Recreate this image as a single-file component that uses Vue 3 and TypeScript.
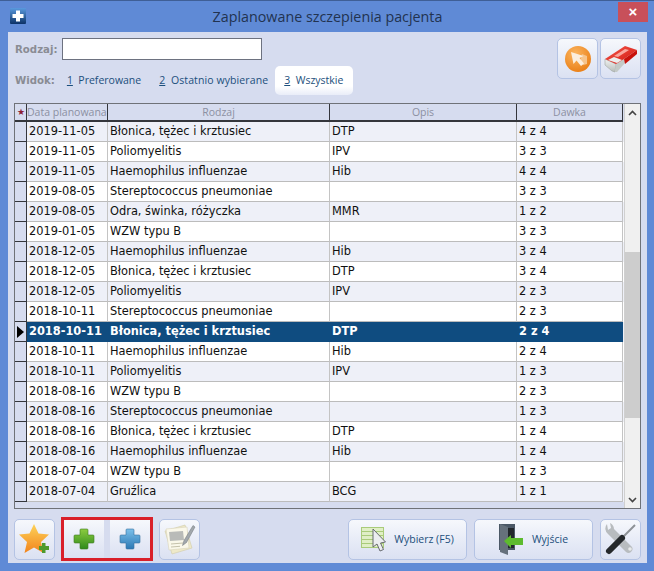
<script setup lang="ts">
interface Row { d: string; r: string; o: string; k: string; sel?: boolean }
const rows: Row[] = [
  { d: '2019-11-05', r: 'Błonica, tężec i krztusiec', o: 'DTP', k: '4 z 4' },
  { d: '2019-11-05', r: 'Poliomyelitis', o: 'IPV', k: '3 z 3' },
  { d: '2019-11-05', r: 'Haemophilus influenzae', o: 'Hib', k: '4 z 4' },
  { d: '2019-08-05', r: 'Stereptococcus pneumoniae', o: '', k: '3 z 3' },
  { d: '2019-08-05', r: 'Odra, świnka, różyczka', o: 'MMR', k: '1 z 2' },
  { d: '2019-01-05', r: 'WZW typu B', o: '', k: '3 z 3' },
  { d: '2018-12-05', r: 'Haemophilus influenzae', o: 'Hib', k: '3 z 4' },
  { d: '2018-12-05', r: 'Błonica, tężec i krztusiec', o: 'DTP', k: '3 z 4' },
  { d: '2018-12-05', r: 'Poliomyelitis', o: 'IPV', k: '2 z 3' },
  { d: '2018-10-11', r: 'Stereptococcus pneumoniae', o: '', k: '2 z 3' },
  { d: '2018-10-11', r: 'Błonica, tężec i krztusiec', o: 'DTP', k: '2 z 4', sel: true },
  { d: '2018-10-11', r: 'Haemophilus influenzae', o: 'Hib', k: '2 z 4' },
  { d: '2018-10-11', r: 'Poliomyelitis', o: 'IPV', k: '1 z 3' },
  { d: '2018-08-16', r: 'WZW typu B', o: '', k: '2 z 3' },
  { d: '2018-08-16', r: 'Stereptococcus pneumoniae', o: '', k: '1 z 3' },
  { d: '2018-08-16', r: 'Błonica, tężec i krztusiec', o: 'DTP', k: '1 z 4' },
  { d: '2018-08-16', r: 'Haemophilus influenzae', o: 'Hib', k: '1 z 4' },
  { d: '2018-07-04', r: 'WZW typu B', o: '', k: '1 z 3' },
  { d: '2018-07-04', r: 'Gruźlica', o: 'BCG', k: '1 z 1' },
]
const crossPath = 'M8 1h6a1 1 0 0 1 1 1v5h5a1 1 0 0 1 1 1v6a1 1 0 0 1-1 1h-5v5a1 1 0 0 1-1 1H8a1 1 0 0 1-1-1v-5H2a1 1 0 0 1-1-1V8a1 1 0 0 1 1-1h5V2a1 1 0 0 1 1-1z'
</script>

<template>
  <div class="window">
    <header class="titlebar">
      <svg class="appicon" width="16" height="16" viewBox="0 0 16 16">
        <defs>
          <linearGradient id="ai" x1="0" y1="0" x2="0" y2="1">
            <stop offset="0" stop-color="#5a9ade" />
            <stop offset="1" stop-color="#0c3266" />
          </linearGradient>
        </defs>
        <rect width="16" height="16" rx="1" fill="url(#ai)" />
        <path d="M6 2.500h4V6h3.500v4H10v3.500H6V10H2.500V6H6z" fill="#fff" />
      </svg>
      <h1 class="title">Zaplanowane szczepienia pacjenta</h1>
      <button class="close">×</button>
    </header>

    <main class="body">
      <section class="top">
        <div class="filters">
          <div class="line">
            <label class="lab">Rodzaj:</label>
            <input class="search" type="text" />
          </div>
          <div class="line views">
            <span class="lab">Widok:</span>
            <a class="tab"><u>1</u>&nbsp; Preferowane</a>
            <a class="tab"><u>2</u>&nbsp; Ostatnio wybierane</a>
            <a class="tab active"><u>3</u>&nbsp; Wszystkie</a>
          </div>
        </div>
        <div class="topbtns">
          <button class="btn sq">
            <svg width="28" height="28" viewBox="0 0 28 28">
              <defs>
                <radialGradient id="or" cx="0.4" cy="0.3" r="0.8">
                  <stop offset="0" stop-color="#fbb560" />
                  <stop offset="1" stop-color="#e87a10" />
                </radialGradient>
              </defs>
              <circle cx="14" cy="14" r="13" fill="url(#or)" />
              <path d="M18 9l5 2v8l-4 1-3-3z" fill="#f6c48c" />
              <path d="M7 7l2.500 12 3-3.500 4.500 5.500 3-2.500-4.500-5.500 4-2z" fill="#fbeede" />
            </svg>
          </button>
          <button class="btn sq">
            <svg width="34" height="28" viewBox="0 0 34 28">
              <defs>
                <linearGradient id="er" x1="0" y1="0" x2="1" y2="1">
                  <stop offset="0" stop-color="#f2584c" />
                  <stop offset="1" stop-color="#d4160e" />
                </linearGradient>
                <linearGradient id="sl" x1="0" y1="0" x2="0" y2="1">
                  <stop offset="0" stop-color="#f2f4f3" />
                  <stop offset="1" stop-color="#b6bcb9" />
                </linearGradient>
              </defs>
              <path d="M1 14l11 5-1 8-3-1-7-6z" fill="url(#sl)" stroke="#9fa6a3" stroke-width=".6" />
              <path d="M12 19l8-6 1 5-8 9-2 0z" fill="#c4cac7" />
              <path d="M1 14L21 1l12 4-13 9-8 5z" fill="url(#er)" />
              <path d="M20 14l13-9 0 4-12 10z" fill="#c8120c" />
              <path d="M10 11l11-7 4 1-11 7z" fill="#f9a79f" />
              <path d="M4 15l6-3 8 3-5 3z" fill="#eceeed" />
            </svg>
          </button>
        </div>
      </section>

      <section class="grid">
        <div class="tablewrap">
          <div class="row head">
            <div class="ind star">★</div>
            <div class="c1">Data planowana</div>
            <div class="c2">Rodzaj</div>
            <div class="c3">Opis</div>
            <div class="c4">Dawka</div>
          </div>
          <div v-for="(x, i) in rows" :key="i" class="row item" :class="{ odd: i % 2 === 0, sel: x.sel }">
            <div class="ind"><span v-if="x.sel" class="arrow"></span></div>
            <div class="c1">{{ x.d }}</div>
            <div class="c2">{{ x.r }}</div>
            <div class="c3">{{ x.o }}</div>
            <div class="c4">{{ x.k }}</div>
          </div>
        </div>
        <div class="scroll">
          <svg class="chev" width="9" height="6" viewBox="0 0 9 6"><path d="M1 5l3.500-3.500L8 5" fill="none" stroke="#444" stroke-width="1.600" /></svg>
          <div class="track"><div class="thumb"></div></div>
          <svg class="chev" width="9" height="6" viewBox="0 0 9 6"><path d="M1 1l3.500 3.500L8 1" fill="none" stroke="#444" stroke-width="1.600" /></svg>
        </div>
      </section>

      <footer class="bottom">
        <div class="group">
          <button class="btn sq">
            <svg width="34" height="34" viewBox="0 0 34 34">
              <defs>
                <linearGradient id="st" x1="0" y1="0" x2="0" y2="1">
                  <stop offset="0" stop-color="#fdd35a" />
                  <stop offset="1" stop-color="#f2841c" />
                </linearGradient>
              </defs>
              <path d="M16 2l4.500 9.500 10.500 1-8 7.500 2.500 11L16 25.500 6.500 31 9 20l-8-7.500 10.500-1z" fill="url(#st)" />
              <path d="M24 21h3.500v3H31v4h-3.500v3H24v-3h-3v-4h3z" fill="#4d9a2c" />
            </svg>
          </button>
          <div class="redbox">
            <button class="btn flat">
              <svg width="22" height="22" viewBox="0 0 22 22">
                <defs>
                  <linearGradient id="gr" x1="0" y1="0" x2="0" y2="1">
                    <stop offset="0" stop-color="#8ccc3f" />
                    <stop offset="1" stop-color="#2f8a1c" />
                  </linearGradient>
                </defs>
                <path :d="crossPath" fill="url(#gr)" stroke="#3e7a22" stroke-width=".6" />
              </svg>
            </button>
            <button class="btn flat">
              <svg width="22" height="22" viewBox="0 0 22 22">
                <defs>
                  <linearGradient id="bl" x1="0" y1="0" x2="0" y2="1">
                    <stop offset="0" stop-color="#7cc0ea" />
                    <stop offset="1" stop-color="#2c78b4" />
                  </linearGradient>
                </defs>
                <path :d="crossPath" fill="url(#bl)" stroke="#35709e" stroke-width=".6" />
              </svg>
            </button>
          </div>
          <button class="btn sq">
            <svg width="34" height="34" viewBox="0 0 34 34">
              <path d="M2 9l20-6 7 23-20 6z" fill="#eee9c9" stroke="#d0cba8" stroke-width=".6" />
              <path d="M3 7l21-2 2 21-20 2z" fill="#faf8ea" stroke="#d8d4ba" stroke-width=".6" />
              <path d="M6 10l14-1 1 9-14 1z" fill="#b9bbb8" />
              <path d="M8 22l12-1M8 25l9-.700" stroke="#c5c2ab" stroke-width="1" />
              <path d="M32 5l-2-1.500-9 15-1.500 5 4-3z" fill="#a2a8ac" stroke="#6d7378" stroke-width=".5" />
            </svg>
          </button>
        </div>
        <div class="group right">
          <button class="btn wide">
            <svg width="25" height="26" viewBox="0 0 25 26">
              <g fill="#e0efc6" stroke="#a9cb7a" stroke-width="1">
                <rect x="0.500" y="1.500" width="22" height="4" />
                <rect x="0.500" y="5.500" width="22" height="4" />
                <rect x="0.500" y="9.500" width="22" height="4" />
                <rect x="0.500" y="13.500" width="22" height="4" />
                <rect x="0.500" y="17.500" width="22" height="4" />
              </g>
              <path d="M12 3v18l4-3 3 7 3.500-1.500-3-6.500 5-1z" fill="#eceef0" stroke="#676b70" stroke-width="1" />
            </svg>
            <span>Wybierz (F5)</span>
          </button>
          <button class="btn wide exit">
            <svg width="25" height="32" viewBox="0 0 25 32">
              <path d="M0 1h16v26H0z" fill="#4b5866" />
              <path d="M1 1l8 3v28l-8-3z" fill="#66717c" />
              <path d="M9 5h6v20H9z" fill="#22272c" />
              <path d="M5 18l7-6v3h12v7H12v3z" fill="#5dbb2e" />
            </svg>
            <span>Wyjście</span>
          </button>
          <button class="btn sq">
            <svg width="34" height="34" viewBox="0 0 34 34">
              <path d="M3 2a7 7 0 0 0 1 10l18 18a4 4 0 0 0 6-5L10 7a7 7 0 0 0-4-6l1 5-3 2z" fill="#b8bcbf" />
              <circle cx="26" cy="27" r="1.800" fill="#e8eaeb" />
              <path d="M31 3L17 17" stroke="#8d9296" stroke-width="2" />
              <path d="M18 16L5 29" stroke="#25292c" stroke-width="6" stroke-linecap="round" />
            </svg>
          </button>
        </div>
      </footer>
    </main>
  </div>
</template>

<style>
html, body { margin: 0; padding: 0; }
</style>

<style scoped>
.window {
  box-sizing: border-box;
  width: 654px;
  height: 571px;
  background: #5f8ad6;
  border-top: 1px solid #3f5f96;
  padding: 0 7px 8px 8px;
  display: flex;
  flex-direction: column;
  font-family: "DejaVu Sans", sans-serif;
}
.titlebar {
  height: 31px;
  display: flex;
  align-items: center;
  position: relative;
  flex: none;
}
.appicon { margin: -1px 0 0 2px; }
.title {
  flex: 1;
  margin: 0;
  font: 400 14.300px "Open Sans", sans-serif;
  color: #223350;
  text-align: center;
  padding-right: 18px;
}
.close {
  position: absolute;
  right: -1px;
  top: 1px;
  width: 30px;
  height: 20px;
  border: 0;
  padding: 0 0 2px;
  background: #c8505a;
  color: #fff;
  font: 700 15px "Liberation Sans", sans-serif;
}
.body {
  flex: 1;
  min-height: 0;
  background: #d6dcef;
  display: flex;
  flex-direction: column;
  padding: 6px 6px 0 6px;
}
.top {
  display: flex;
  justify-content: space-between;
  height: 63px;
  flex: none;
}
.line { display: flex; align-items: center; }
.lab {
  font: 700 10.200px "DejaVu Sans", sans-serif;
  color: #8a8c94;
  margin-left: 1px;
}
.search {
  box-sizing: border-box;
  width: 200px;
  height: 22px;
  margin-left: 4px;
  border: 1px solid #6d7280;
  background: #fff;
  padding: 0;
}
.views { margin-top: 6px; height: 29px; }
.tab {
  font: 400 10.500px "Open Sans", sans-serif;
  color: #1c4f7c;
  margin-left: 18px;
  line-height: 29px;
  white-space: nowrap;
}
.views .tab:nth-child(2) { margin-left: 12px; }
.views .tab:nth-child(3) { letter-spacing: .1px; }
.tab.active {
  background: linear-gradient(#fff 70%, #e9edf8);
  border-radius: 5px;
  padding: 0 10px 0 9px;
  margin-left: 7px;
}
.topbtns { display: flex; gap: 2px; }
.btn {
  box-sizing: border-box;
  border: 1px solid #b4c3e4;
  border-radius: 5px;
  background: linear-gradient(#f6f8fc, #e8ecf7 50%, #dbe1f2);
  padding: 0;
  display: flex;
  align-items: center;
  justify-content: center;
}
.sq { width: 41px; height: 41px; }
.grid {
  flex: none;
  margin-top: 2px;
  height: 406px;
  border: 1px solid #6f7278;
  display: flex;
  background: #d6dcef;
  box-sizing: border-box;
}
.tablewrap { width: 609px; flex: none; overflow: hidden; }
.row {
  display: grid;
  grid-template-columns: 12px 81px 222px 187px 106px;
  height: 20px;
}
.row > div {
  box-sizing: border-box;
  white-space: nowrap;
  overflow: hidden;
}
.head { height: 18px; }
.head > div {
  border-right: 1.500px solid #34363c;
  border-bottom: 2px solid #34363c;
  color: #8c90a2;
  font: 400 10.500px/16px "Open Sans", sans-serif;
  text-align: center;
}
.head .c1 { text-align: left; }
.star { color: #8c2035 !important; font-size: 9px !important; }
.item { background: #fff; }
.item.odd { background: #eef0f8; }
.item > div {
  font: 400 11.400px/19px "DejaVu Sans", sans-serif;
  color: #101010;
  padding-left: 2px;
  border-bottom: 1px solid #bcbcbc;
  border-right: 1px solid #c4c4c4;
}
.item > .ind {
  background: #d6dcef;
  border-right: 1px solid #34363c;
  border-bottom: 1px solid #34363c;
  padding: 0;
  display: flex;
  align-items: center;
  justify-content: center;
}
.arrow {
  border-left: 7px solid #000;
  border-top: 6px solid transparent;
  border-bottom: 6px solid transparent;
}
.sel > div:not(.ind) {
  background: #0f4c80;
  color: #fff;
  font-weight: 700;
  border-color: #0f4c80;
}
.scroll {
  flex: 1;
  background: #f0f0f0;
  display: flex;
  flex-direction: column;
  align-items: center;
  border-left: 1px solid #d0d0d0;
}
.chev { margin: 6px 0 5px; flex: none; }
.track { flex: 1; width: 100%; display: flex; flex-direction: column; }
.thumb { margin-top: 131px; height: 166px; background: #cdcdcd; }
.bottom {
  display: flex;
  justify-content: space-between;
  margin-top: 8px;
  flex: none;
}
.group { display: flex; align-items: center; gap: 6px; }
.right { gap: 7px; }
.redbox {
  display: flex;
  border: 3px solid #d9202a;
  box-sizing: border-box;
  height: 44px;
  width: 92px;
  align-items: center;
  justify-content: space-between;
  gap: 6px;
}
.flat { flex: 1; height: 38px; border-radius: 0; border-width: 0; }
.wide {
  width: 119px;
  height: 41px;
  gap: 8px;
  font: 400 10.500px "Open Sans", sans-serif;
  color: #1c4f7c;
}
</style>
